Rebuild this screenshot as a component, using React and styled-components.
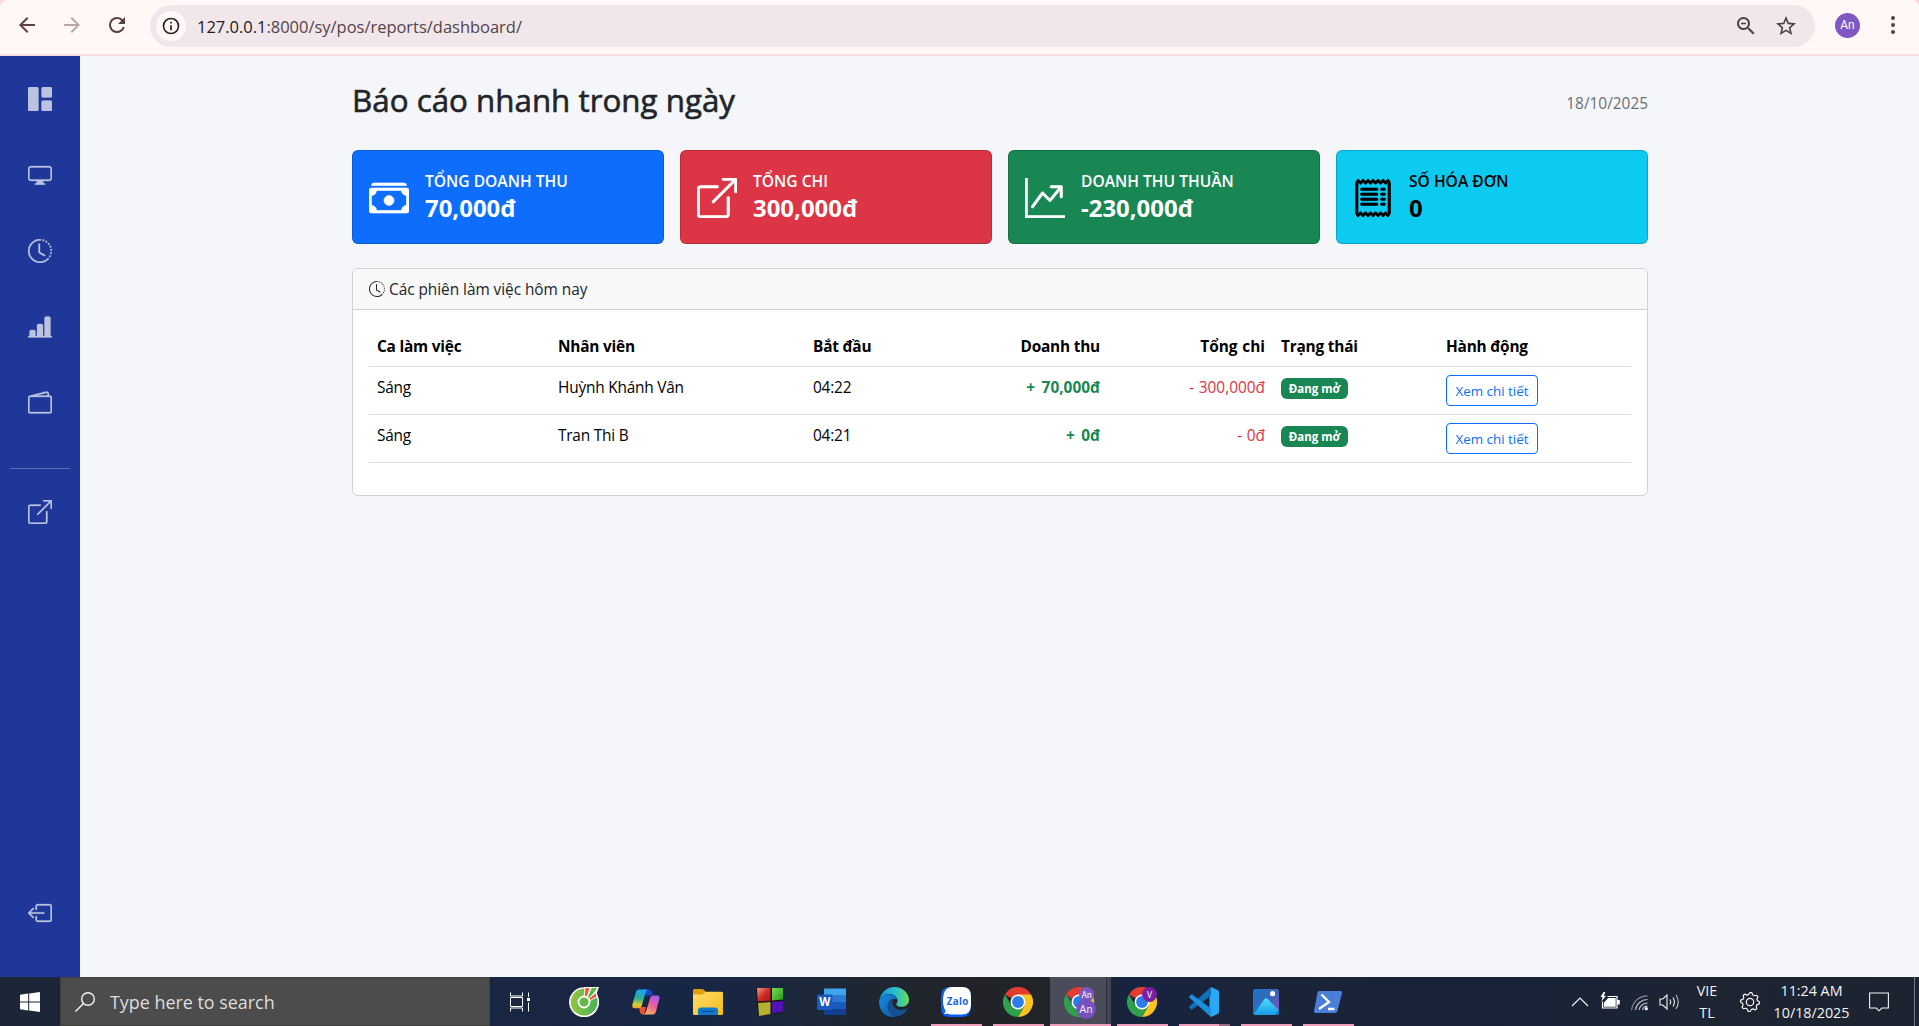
import React from "react";
import styled, { createGlobalStyle } from "styled-components";
import {
  BsGrid1X2Fill,
  BsDisplay,
  BsClockHistory,
  BsBarChartLineFill,
  BsWallet2,
  BsBoxArrowUpRight,
  BsBoxArrowLeft,
  BsCashStack,
  BsGraphUpArrow,
  BsReceipt,
} from "react-icons/bs";

const GlobalStyle = createGlobalStyle`
  *, *::before, *::after { box-sizing: border-box; }
  body {
    margin: 0;
    overflow: hidden;
    font-family: "Open Sans", "Noto Sans", sans-serif;
    font-size: 15.4px;
    line-height: 24px;
    color: #212529;
    background: #f5f6fa;
  }
  svg { display: block; flex: none; }
`;

const Screen = styled.div`
  display: flex;
  flex-direction: column;
  width: 100vw;
  height: 100vh;
`;

/* ---------- browser toolbar ---------- */

const ToolbarEdge = styled.div`
  flex: none;
  background: #fcd5dc;
`;

const Toolbar = styled.header`
  display: flex;
  align-items: center;
  height: 56px;
  padding: 0 14px 4px 15px;
  border-bottom: 2px solid #f3dde0;
  border-radius: 7px 7px 0 0;
  background: #fff8f7;
`;

const NavButtons = styled.div`
  display: flex;
  gap: 21px;
  width: 135px;
`;

const AddressBar = styled.div`
  display: flex;
  flex: 1;
  align-items: center;
  height: 42px;
  margin-top: 2px;
  padding: 0 17px 0 6px;
  border-radius: 21px;
  background: #f1e6ea;
`;

const SiteInfo = styled.span`
  display: grid;
  place-items: center;
  width: 30px;
  height: 30px;
  margin-right: 11px;
  border-radius: 50%;
  background: #fff8f7;
`;

const Url = styled.span`
  flex: 1;
  padding-top: 2px;
  font-size: 16.5px;
  letter-spacing: -0.02px;
  color: #51444a;
  b { font-weight: 400; color: #221a1d; }
`;

const AddressActions = styled.div`
  display: flex;
  gap: 16px;
`;

const Profile = styled.span`
  display: grid;
  place-items: center;
  width: 25px;
  height: 25px;
  margin: 0 21px 0 20px;
  border-radius: 50%;
  background: #7e57c2;
  color: #fff;
  font: 12px/25px Roboto, sans-serif;
`;

/* ---------- page ---------- */

const Page = styled.div`
  display: flex;
  flex: 1;
  min-height: 0;
`;

const Sidebar = styled.nav`
  display: flex;
  flex-direction: column;
  gap: 16px;
  width: 80px;
  padding: 13px 10px 34px;
  background: #1e3799;
`;

const SideLink = styled.a`
  display: grid;
  place-items: center;
  height: 60px;
  margin-top: ${(p) => (p.$bottom ? "auto" : "0")};
  color: #bbc3e0;
  svg { stroke-width: 0.2; }
`;

const SideRule = styled.hr`
  width: 60px;
  height: 1px;
  margin: 19px 0 -3px;
  border: 0;
  background: #5a6db4;
`;

const Main = styled.main`
  flex: 1;
  padding-left: 1px;
`;

const Container = styled.div`
  width: 1296px;
  margin: 0 auto;
  padding-top: 24px;
`;

const Heading = styled.div`
  display: flex;
  align-items: flex-start;
  justify-content: space-between;
  height: 46px;
`;

const Title = styled.h1`
  margin: 1px 0 0;
  font-size: 31.3px;
  font-weight: 500;
  line-height: 38px;
  -webkit-text-stroke: 0.6px currentColor;
  letter-spacing: 0.02px;
`;

const Today = styled.span`
  padding-top: 12px;
  color: #6a6f75;
`;

const Stats = styled.section`
  display: grid;
  grid-template-columns: repeat(4, 1fr);
  gap: 16px;
  margin-top: 24px;
`;

const StatCard = styled.article`
  display: flex;
  align-items: center;
  gap: 16px;
  height: 94px;
  padding: 0 16px;
  border: 1px solid rgba(0, 0, 0, 0.176);
  border-radius: 6px;
  background: ${(p) => p.$bg};
  color: ${(p) => p.$fg || "#fff"};
  svg { margin-top: 2px; stroke-width: 0.25; }
`;

const StatLabel = styled.div`
  padding-top: 1px;
  font-size: 15.6px;
  font-weight: 600;
  line-height: 19px;
`;

const StatValue = styled.div`
  margin: 2px 0 1px;
  font-size: 23.95px;
  font-weight: 700;
  line-height: 29px;
`;

const Panel = styled.section`
  margin-top: 24px;
  border: 1px solid #d1d2d5;
  border-radius: 6px;
  background: #fff;
  overflow: hidden;
`;

const PanelHeader = styled.div`
  display: flex;
  align-items: center;
  gap: 4px;
  height: 41px;
  padding: 0 16px;
  border-bottom: 1px solid #d0d0d0;
  background: #f8f8f8;
  letter-spacing: -0.04px;
  span { padding-top: 1px; }
`;

const PanelBody = styled.div`
  padding: 16px 16px 32px;
`;

const Row = styled.div`
  display: grid;
  grid-template-columns: 181px 255px 138px 165px 165px 165px 193px;
  height: ${(p) => (p.$head ? "41px" : "48px")};
  padding-top: 8px;
  border-bottom: 1px solid #dee2e6;
  color: #000;
  font-weight: ${(p) => (p.$head ? 700 : 400)};
`;

const Cell = styled.div`
  padding: ${(p) => (p.$control ? 0 : 1)}px 8px 0;
  white-space: nowrap;
  text-align: ${(p) => (p.$right ? "right" : "left")};
  font-weight: ${(p) => (p.$bold ? 700 : "inherit")};
  letter-spacing: ${(p) => (p.$money ? "normal" : "-0.2px")};
  word-spacing: ${(p) => (p.$money ? (p.$bold ? "2.5px" : "0.8px") : "normal")};
  color: ${(p) => p.$color || "inherit"};
`;

const Badge = styled.span`
  display: block;
  width: 67px;
  height: 21px;
  margin-top: 3px;
  border-radius: 6px;
  background: #198754;
  color: #fff;
  font-size: 11.5px;
  font-weight: 700;
  line-height: 21px;
  letter-spacing: normal;
  text-align: center;
`;

const DetailButton = styled.button`
  display: block;
  width: 92px;
  height: 31px;
  padding: 0;
  border: 1px solid #0d6efd;
  border-radius: 4px;
  background: transparent;
  color: #0d6efd;
  font: 13.4px/30px "Open Sans", "Noto Sans", sans-serif;
`;

/* ---------- taskbar ---------- */

const Taskbar = styled.footer`
  display: flex;
  flex: none;
  height: 49px;
  background: linear-gradient(90deg, #1b2637 0, #1a2740 400px, #182646 700px, #1d2733 860px, #212329 960px, #212429 1050px, #17243f 1130px, #1a2539 1250px, #172238 1500px, #1d2533 1700px, #1c2432 1919px);
`;

const StartButton = styled.div`
  display: grid;
  place-items: center;
  width: 60px;
`;

const SearchBox = styled.div`
  display: flex;
  align-items: center;
  gap: 15px;
  width: 430px;
  padding-left: 14px;
  border: 1px solid #423f3f;
  background: #4c4c4c;
  color: #dedede;
  font-size: 17.9px;
`;

const Apps = styled.div`
  display: flex;
`;

const TaskItem = styled.div`
  position: relative;
  display: grid;
  place-items: center;
  width: ${(p) => p.$w || 62}px;
  margin-right: ${(p) => p.$gap || 0}px;
  padding-top: 1px;
  background: ${(p) => (p.$active ? "linear-gradient(90deg, transparent 0 1px, #4a4d59 1px 57px, #2c303b 57px 58px, #444753 58px)" : "none")};
  &::after {
    content: "";
    position: absolute;
    bottom: 0;
    left: ${(p) => (p.$active ? 1 : 6)}px;
    width: ${(p) => (p.$active ? 61 : 51)}px;
    height: 2px;
    background: ${(p) =>
      !p.$open ? "none" : p.$stacked ? "linear-gradient(90deg, #ee9dbb 0 79%, #9b6d84 79%)" : "#ee9dbb"};
  }
`;

const Tray = styled.div`
  display: flex;
  align-items: center;
  margin-left: auto;
  padding-right: 4px;
  color: #f2f2f2;
`;

const TrayIcon = styled.div`
  display: grid;
  place-items: center;
  width: 30px;
`;

const TrayText = styled.div`
  width: ${(p) => p.$w}px;
  padding-right: 6px;
  font-size: 14.3px;
  line-height: 22px;
  text-align: center;
  white-space: nowrap;
`;

const ShowDesktop = styled.div`
  width: 1px;
  height: 49px;
  margin-left: 20px;
  background: #737882;
`;

/* ---------- drawings ---------- */

const Glyph = ({ size = 24, w, h, box = "0 0 24 24", children, ...rest }) => (
  <svg width={w || size} height={h || size} viewBox={box} {...rest}>{children}</svg>
);

const Back = () => (
  <Glyph fill="#5c3f47"><path d="M20 11H7.83l5.59-5.59L12 4l-8 8 8 8 1.41-1.41L7.83 13H20z" /></Glyph>
);
const Forward = () => (
  <Glyph fill="#b5a8aa"><path d="M4 11h12.17l-5.59-5.59L12 4l8 8-8 8-1.41-1.41L16.17 13H4z" /></Glyph>
);
const Reload = () => (
  <Glyph fill="#5c3f47"><path d="M17.65 6.35A7.96 7.96 0 0 0 12 4a8 8 0 1 0 7.73 10h-2.08A6 6 0 1 1 12 6c1.66 0 3.14.69 4.22 1.78L13 11h7V4z" /></Glyph>
);
const Info = () => (
  <Glyph size={20} fill="#2b2024"><path d="M11 17h2v-6h-2zm1-15a10 10 0 1 0 0 20 10 10 0 0 0 0-20m0 18a8 8 0 1 1 0-16 8 8 0 0 1 0 16M11 9h2V7h-2z" /></Glyph>
);
const ZoomOut = () => (
  <Glyph fill="#4d4045"><path d="M15.5 14h-.79l-.28-.27A6.5 6.5 0 1 0 13.73 14.43l.27.28v.79l5 4.99L20.49 19zm-6 0a4.5 4.5 0 1 1 0-9 4.5 4.5 0 0 1 0 9M7 8.7h5v1.6H7z" /></Glyph>
);
const Star = () => (
  <Glyph fill="#4d4045"><path d="m22 9.24-7.19-.62L12 2 9.19 8.63 2 9.24l5.46 4.73L5.82 21 12 17.27 18.18 21l-1.63-7.03zM12 15.4l-3.76 2.27 1-4.28-3.32-2.88 4.38-.38L12 6.1l1.71 4.04 4.38.38-3.32 2.88 1 4.28z" /></Glyph>
);
const Dots = () => (
  <Glyph fill="#5c3f47"><circle cx="12" cy="5" r="2" /><circle cx="12" cy="12" r="2" /><circle cx="12" cy="19" r="2" /></Glyph>
);

const WindowsLogo = () => (
  <Glyph size={20} box="0 0 20 20" fill="#fff"><path d="M0 2.8 8.2 1.6V9.5H0zM9.2 1.5 20 0V9.5H9.2zM0 10.5H8.2V18.4L0 17.2zM9.2 10.5H20V20L9.2 18.5z" /></Glyph>
);
const Magnifier = () => (
  <Glyph size={20} box="0 0 20 20" fill="none" stroke="#f4f4f4" strokeWidth="1.4"><circle cx="13" cy="7" r="6.3" /><path d="M8.5 11.5.5 19.5" /></Glyph>
);
const TaskView = () => (
  <Glyph size={20} box="0 0 20 20" fill="none" stroke="#fff" strokeWidth="1"><path d="M.5.5V4H12.5V.5M.5 5.5H12.5V14.5H.5zM.5 19.5V16H12.5V19.5M18.5.5V5M18.5 10.5V19.5" /><path d="M17 6h3v3h-3z" fill="#fff" stroke="none" /></Glyph>
);

const CocCoc = () => (
  <Glyph size={30} box="0 0 30 30">
    <defs><linearGradient id="cc" x1="0" x2="1"><stop offset="0" stopColor="#94c83d" /><stop offset="1" stopColor="#45b058" /></linearGradient></defs>
    <path d="M15 1A14.2 14.2 0 1 0 28.8 11.5L27 6l2-5.5L20 .5z" fill="url(#cc)" stroke="#fff" strokeWidth="1.6" />
    <path d="m15 10 1-9.5 5 .2L18 11z" fill="#f2583e" stroke="#fff" />
    <path d="m18 11 4.5-10.5H29L20 13z" fill="#5bb946" stroke="#fff" />
    <path d="m18.5 12.5 8.5-7 1 4.5-8 4z" fill="#f2583e" stroke="#fff" />
    <circle cx="15" cy="15" r="5.5" fill="#65b94c" stroke="#fff" strokeWidth="1.8" />
  </Glyph>
);
const Copilot = () => (
  <Glyph size={30} box="0 0 30 30">
    <defs>
      <linearGradient id="cpA" x1=".3" y1="0" x2=".2" y2="1"><stop offset="0" stopColor="#16a4ee" /><stop offset=".45" stopColor="#2fae9c" /><stop offset=".8" stopColor="#d9cc2c" /><stop offset="1" stopColor="#f4a62a" /></linearGradient>
      <linearGradient id="cpB" x1=".8" y1="0" x2=".3" y2="1"><stop offset="0" stopColor="#a15cf2" /><stop offset=".5" stopColor="#ea5d9d" /><stop offset="1" stopColor="#ffb057" /></linearGradient>
    </defs>
    <path d="M10 2.5h8q2.4 0 3.2 3l.8 3h-7z" fill="#1847c4" />
    <path d="M8 20h7l-2 7.5h-1.5q-2 0-2.6-2.4z" fill="#ee5230" />
    <path d="M7.5 2.5H17q-1.7.6-2.4 3L11 18q-1 3.2-4 3.2H3.5q-3 0-2-4.2L4.8 5.5Q5.6 2.6 7.5 2.5z" fill="url(#cpA)" />
    <path d="M22.5 27.5H12.3q2-.6 2.7-3L19 11.4q1-3 4-3h3.2q3.2 0 2 4.2l-3.2 12q-.7 2.8-2.5 2.9z" fill="url(#cpB)" />
  </Glyph>
);
const Explorer = () => (
  <Glyph size={30} box="0 0 30 30">
    <defs><linearGradient id="fx" x1="0" y1="0" x2="1" y2="1"><stop offset="0" stopColor="#ffdf70" /><stop offset="1" stopColor="#f9b916" /></linearGradient></defs>
    <path d="M0 3.5Q0 2 1.5 2H9q1 0 1.8.8L13 5H28q1.5 0 1.5 1.5V12H0z" fill="#e09f0c" />
    <path d="M0 7.5H8.5q1.2 0 2-.8L12.7 4.8H28.5Q30 4.8 30 6.3V26.5Q30 28 28.5 28H1.5Q0 28 0 26.5z" fill="url(#fx)" />
    <path d="M5 28V23.5Q5 20.5 8 20.5H22Q25 20.5 25 23.5V28z" fill="#0f7ad0" />
    <path d="M9 24.4H21.5" stroke="#0b4f8f" strokeWidth="1.3" />
  </Glyph>
);
const FourPanes = () => (
  <Glyph size={30} box="0 0 30 30">
    <defs>
      <linearGradient id="pr" x1="0" y1="0" x2="1" y2="1"><stop offset="0" stopColor="#f39a90" /><stop offset=".5" stopColor="#cf2c22" /><stop offset="1" stopColor="#a81411" /></linearGradient>
      <linearGradient id="pg" x1="0" y1="0" x2="1" y2="1"><stop offset="0" stopColor="#7bdb58" /><stop offset="1" stopColor="#219c15" /></linearGradient>
    </defs>
    <path d="M1 1H28V25L3 29.5z" fill="#10111a" />
    <path d="M2 1H15.5V14L2.7 14.5z" fill="url(#pr)" />
    <path d="M17 1H28V12.5L17 13.5z" fill="url(#pg)" />
    <path d="M3 16 15.5 15V27L4 29z" fill="#b3b12e" />
    <path d="M17 14.8 28 14V24.5L17 26.5z" fill="#5213b4" />
  </Glyph>
);
const Word = () => (
  <Glyph size={30} box="0 0 30 30">
    <path d="M8 1.5H29V8H7V2.5Q7 1.5 8 1.5z" fill="#41a5ee" />
    <path d="M7 8H29V15H7z" fill="#2b7cd3" />
    <path d="M7 15H29V22H7z" fill="#185abd" />
    <path d="M7 22H29V28H8Q7 28 7 27z" fill="#103f91" />
    <rect y="7.5" width="15.5" height="15.5" rx="1.3" fill="#185abd" />
    <text x="7.7" y="19.3" fontSize="11.5" fontWeight="700" textAnchor="middle" fill="#fff" fontFamily="Open Sans, sans-serif">W</text>
  </Glyph>
);
const Edge = () => (
  <Glyph size={30} box="0 0 30 30">
    <defs>
      <linearGradient id="eg" x1="0" x2="1"><stop offset="0" stopColor="#1793d8" /><stop offset=".55" stopColor="#2bbfcd" /><stop offset="1" stopColor="#68dc55" /></linearGradient>
      <linearGradient id="eb" x1="0" y1="0" x2="1" y2="1"><stop offset="0" stopColor="#178be0" /><stop offset="1" stopColor="#0f5aa8" /></linearGradient>
    </defs>
    <path d="M.2 14C1.5 6 7.5 0 15.5 0 24 0 30 6.5 30 12.8c0 4.5-3.3 7-7.5 7-3.5 0-5.3-1.3-5.3-2.4 0-.9 1.3-1.3 1.3-3.7C18.5 9.5 14.5 7 10.5 7 5 7 1.5 10.5.2 14z" fill="url(#eg)" />
    <path d="M.1 14C1.5 10 5.8 7.2 10.3 7.2c4 0 7.5 2 8.1 5-5.5-1.8-9.7 2.3-9.7 7.3 0 5 3.8 9.5 9.3 10-9 2.3-18.5-4-17.9-15.5z" fill="url(#eb)" />
    <path d="M13.5 12.2c-3 1.3-4.8 4.3-4.8 7.3 0 6 5 10 10.3 10 3.7-.8 7.3-3.5 9-7 .4-.8-.3-1.2-.9-.8-6.5 3.3-15.3.3-13.6-9.5z" fill="#164f91" />
  </Glyph>
);
const Zalo = () => (
  <Glyph size={30} box="0 0 30 30">
    <path d="M9 0H21Q30 0 30 9V20Q30 30 20 30H8Q0 30 0 21V9Q0 0 9 0z" fill="#0a5df5" />
    <path d="M11 0H21Q30 0 30 9V18Q30 27.5 21 27.5H10Q8 27.5 6.5 26.5 5 27.3 3 26.8 5 25.5 4.5 23.5 2 20 2 14 2 0 11 0z" fill="#fff" />
    <text x="16.5" y="17.5" fontSize="9.8" fontWeight="700" textAnchor="middle" fill="#1668e8" textLength="21.5" fontFamily="Open Sans, sans-serif">Zalo</text>
  </Glyph>
);
const ChromeMark = () => (
  <g>
    <path d="M15 15 2 7.5A15 15 0 0 1 28 7.5z" fill="#e33b2e" />
    <path d="M15 7.5H28A15 15 0 0 1 15 30L21.5 18.7z" fill="#fcc31e" />
    <path d="M8.5 18.7 2 7.5A15 15 0 0 0 15 30L21.5 18.7z" fill="#2da14c" />
    <circle cx="15" cy="15" r="7.5" fill="#fff" />
    <circle cx="15" cy="15" r="5.9" fill="#2b7de9" />
  </g>
);
const Chrome = () => <Glyph size={30} box="0 0 30 30"><ChromeMark /></Glyph>;
const ChromeAn = () => (
  <Glyph w={34} h={34} box="-2 -2 34 34">
    <g transform="translate(-1 0)"><ChromeMark /></g>
    <g fontFamily="Roboto, sans-serif" textAnchor="middle">
      <circle cx="21.5" cy="7.5" r="7.5" fill="#7e57c2" />
      <text x="21.5" y="10.5" fontSize="8.5" fill="#fff">An</text>
      <circle cx="21" cy="22" r="9.8" fill="#7650bd" />
      <text x="21" y="26" fontSize="11" fill="#f0eaf9">An</text>
    </g>
  </Glyph>
);
const ChromeV = () => (
  <Glyph size={30} box="0 0 30 30">
    <ChromeMark />
    <circle cx="22.5" cy="7.5" r="7.5" fill="#7b1fa2" />
    <text x="22.5" y="10.6" fontSize="8.5" fill="#fff" textAnchor="middle" fontFamily="Roboto, sans-serif">V</text>
  </Glyph>
);
const VsCode = () => (
  <Glyph size={30} box="0 0 30 30">
    <path d="M22 0 29 3.2Q30 3.7 30 5V25Q30 26.3 29 26.8L22 30 20.5 27V3z" fill="#2aa8f2" />
    <path d="M22 0V8.5L3.5 22.3Q2.8 22.9 2 22.3L.5 20.9Q-.3 20 .5 19.2z" fill="#0f72b8" />
    <path d="M22 30V21.5L3.5 7.7Q2.8 7.1 2 7.7L.5 9.1Q-.3 10 .5 10.8z" fill="#1d8fdb" />
  </Glyph>
);
const Photos = () => (
  <Glyph size={26} box="0 0 26 26">
    <defs>
      <linearGradient id="ph" x1="0" y1="0" x2="1" y2="1"><stop offset="0" stopColor="#1c74c4" /><stop offset=".5" stopColor="#3b67ba" /><stop offset="1" stopColor="#8a4fb5" /></linearGradient>
      <linearGradient id="pm" x1=".5" y1="0" x2=".5" y2="1"><stop offset="0" stopColor="#4fdcf8" /><stop offset="1" stopColor="#1a9be6" /></linearGradient>
    </defs>
    <rect width="26" height="26" rx="2.5" fill="url(#ph)" />
    <path d="M0 21.5 11 10.3Q13 8.3 15 10.3L26 21.5V24Q26 26 24 26H2Q0 26 0 24z" fill="#1579ce" />
    <path d="M1 24.8 11.5 10Q13 8.4 14.8 10L25.5 21 22 26H2z" fill="url(#pm)" />
    <circle cx="19.5" cy="4.7" r="2.6" fill="#fff" />
  </Glyph>
);
const PowerShell = () => (
  <Glyph w={30} h={24} box="0 0 30 24">
    <path d="M6 1H27.5Q29.5 1 29 3L24.5 21Q24 23 22 23H2.5Q.5 23 1 21L4.5 2.5Q5 1 6 1z" fill="#4a7fd8" />
    <path d="m8.5 4.5 7.5 7.5-10 7M15 19h6.5" fill="none" stroke="#fff" strokeWidth="2.3" />
  </Glyph>
);

const Chevron = () => (
  <Glyph size={18} box="0 0 18 18" fill="none" stroke="#f2f2f2" strokeWidth="1.2"><path d="m1 13 8-8 8 8" /></Glyph>
);
const Battery = () => (
  <Glyph size={20} box="0 0 20 20">
    <path d="M7.5 4.5H17V16H2.5V9.5" fill="none" stroke="#fff" strokeWidth="1.2" />
    <path d="M8 6H15.7V14.7H3.8V11zM17 8h2.8v4.5H17zM3.5 0 .5 5h2l-1 4.5L6 3.8H3.8L5.3 0z" fill="#fff" />
  </Glyph>
);
const Wifi = () => (
  <Glyph size={18} box="0 0 18 18" fill="none" strokeWidth="1.2">
    <path d="M.6 17A16 16 0 0 1 16.5 2.8" stroke="#878c94" />
    <path d="M4.5 17A12 12 0 0 1 16.5 6.5M8 17a8.5 8.5 0 0 1 8.5-7M11.5 17a5 5 0 0 1 5-3.8" stroke="#b9bdc3" />
    <circle cx="15.3" cy="15.7" r="1.6" fill="#fff" />
  </Glyph>
);
const Volume = () => (
  <Glyph w={22} h={20} box="0 0 22 20" fill="none" stroke="#f2f2f2" strokeWidth="1.1">
    <path d="M1 7H3.8L8 3V17L3.8 13H1z" /><path d="M11 7.5q1.5 2.5 0 5M14 5.5q2.8 4.5 0 9" /><path d="M17 3q4.5 7 0 14" stroke="#bcc0c5" />
  </Glyph>
);
const teeth = Array.from({ length: 32 }, (_, i) => {
  const r = i % 4 < 2 ? 9.5 : 7.5;
  const a = ((i + 0.5) / 32) * Math.PI * 2 - 0.1;
  return `${(10 + r * Math.cos(a)).toFixed(2)},${(10 + r * Math.sin(a)).toFixed(2)}`;
}).join(" ");
const Gear = () => (
  <Glyph size={20} box="0 0 20 20" fill="none" stroke="#f2f2f2" strokeWidth="1.2" strokeLinejoin="round"><polygon points={teeth} /><circle cx="10" cy="10" r="3.7" /></Glyph>
);
const Notification = () => (
  <Glyph size={20} box="0 0 20 20" fill="none" stroke="#f5f5f5" strokeWidth="1.1"><path d="M.6 1H19.4V16H12.8L10 18.8 7.2 16H.6z" /></Glyph>
);

/* ---------- data ---------- */

const sideLinks = [BsGrid1X2Fill, BsDisplay, BsClockHistory, BsBarChartLineFill, BsWallet2];

const stats = [
  { icon: BsCashStack, label: "TỔNG DOANH THU", value: "70,000đ", bg: "#0d6efd" },
  { icon: BsBoxArrowUpRight, label: "TỔNG CHI", value: "300,000đ", bg: "#dc3545" },
  { icon: BsGraphUpArrow, label: "DOANH THU THUẦN", value: "-230,000đ", bg: "#198754" },
  { icon: BsReceipt, label: "SỐ HÓA ĐƠN", value: "0", bg: "#0dcaf0", fg: "#000" },
];

const sessions = [
  { shift: "Sáng", staff: "Huỳnh Khánh Vân", start: "04:22", income: "+ 70,000đ", expense: "- 300,000đ" },
  { shift: "Sáng", staff: "Tran Thi B", start: "04:21", income: "+ 0đ", expense: "- 0đ" },
];

const apps = [
  { icon: TaskView, w: 60, gap: 3 },
  { icon: CocCoc },
  { icon: Copilot },
  { icon: Explorer },
  { icon: FourPanes },
  { icon: Word },
  { icon: Edge },
  { icon: Zalo, open: true },
  { icon: Chrome, open: true },
  { icon: ChromeAn, open: true, active: true },
  { icon: ChromeV, open: true },
  { icon: VsCode, open: true, stacked: true },
  { icon: Photos, open: true },
  { icon: PowerShell, open: true },
];

export default function App() {
  return (
    <Screen>
      <GlobalStyle />
      <ToolbarEdge>
        <Toolbar>
          <NavButtons><Back /><Forward /><Reload /></NavButtons>
          <AddressBar>
            <SiteInfo><Info /></SiteInfo>
            <Url><b>127.0.0.1</b>:8000/sy/pos/reports/dashboard/</Url>
            <AddressActions><ZoomOut /><Star /></AddressActions>
          </AddressBar>
          <Profile>An</Profile>
          <Dots />
        </Toolbar>
      </ToolbarEdge>

      <Page>
        <Sidebar>
          {sideLinks.map((Icon, i) => (
            <SideLink key={i}><Icon size={24} /></SideLink>
          ))}
          <SideRule />
          <SideLink><BsBoxArrowUpRight size={24} /></SideLink>
          <SideLink $bottom><BsBoxArrowLeft size={24} /></SideLink>
        </Sidebar>

        <Main>
          <Container>
            <Heading>
              <Title>Báo cáo nhanh trong ngày</Title>
              <Today>18/10/2025</Today>
            </Heading>

            <Stats>
              {stats.map(({ icon: Icon, label, value, bg, fg }) => (
                <StatCard key={label} $bg={bg} $fg={fg}>
                  <Icon size={40} />
                  <div>
                    <StatLabel>{label}</StatLabel>
                    <StatValue>{value}</StatValue>
                  </div>
                </StatCard>
              ))}
            </Stats>

            <Panel>
              <PanelHeader>
                <BsClockHistory size={16} />
                <span>Các phiên làm việc hôm nay</span>
              </PanelHeader>
              <PanelBody>
                <Row $head>
                  <Cell>Ca làm việc</Cell>
                  <Cell>Nhân viên</Cell>
                  <Cell>Bắt đầu</Cell>
                  <Cell $right>Doanh thu</Cell>
                  <Cell $right $money>Tổng chi</Cell>
                  <Cell>Trạng thái</Cell>
                  <Cell>Hành động</Cell>
                </Row>
                {sessions.map((s) => (
                  <Row key={s.start}>
                    <Cell>{s.shift}</Cell>
                    <Cell>{s.staff}</Cell>
                    <Cell>{s.start}</Cell>
                    <Cell $right $money $bold $color="#198754">{s.income}</Cell>
                    <Cell $right $money $color="#dc3545">{s.expense}</Cell>
                    <Cell $control><Badge>Đang mở</Badge></Cell>
                    <Cell $control><DetailButton>Xem chi tiết</DetailButton></Cell>
                  </Row>
                ))}
              </PanelBody>
            </Panel>
          </Container>
        </Main>
      </Page>

      <Taskbar>
        <StartButton><WindowsLogo /></StartButton>
        <SearchBox><Magnifier />Type here to search</SearchBox>
        <Apps>
          {apps.map(({ icon: Icon, w, gap, open, active, stacked }, i) => (
            <TaskItem key={i} $w={w} $gap={gap} $open={open} $active={active} $stacked={stacked}><Icon /></TaskItem>
          ))}
        </Apps>
        <Tray>
          <TrayIcon><Chevron /></TrayIcon>
          <TrayIcon><Battery /></TrayIcon>
          <TrayIcon><Wifi /></TrayIcon>
          <TrayIcon><Volume /></TrayIcon>
          <TrayText $w={50}>VIE<br />TL</TrayText>
          <TrayIcon><Gear /></TrayIcon>
          <TrayText $w={99}>11:24 AM<br />10/18/2025</TrayText>
          <TrayIcon><Notification /></TrayIcon>
          <ShowDesktop />
        </Tray>
      </Taskbar>
    </Screen>
  );
}
